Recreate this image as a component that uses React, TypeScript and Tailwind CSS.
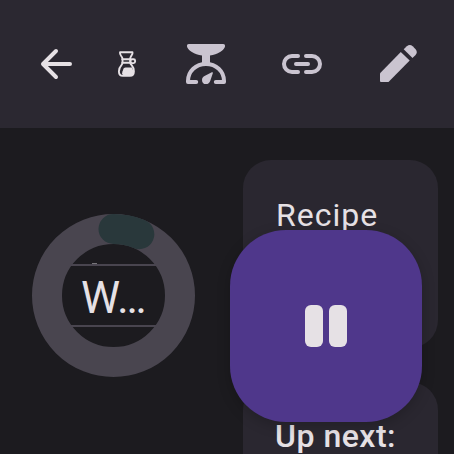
import React from "react";

function BackIcon() {
  return (
    <svg className="h-12 w-12" viewBox="0 0 48 48" fill="none" stroke="#e6e1e5" strokeWidth="4" strokeLinecap="round" strokeLinejoin="round">
      <path d="M24 11 L11 24 L24 37 M11 24 H38" />
    </svg>
  );
}

function ChemexIcon() {
  return (
    <svg className="h-10 w-[34px]" viewBox="0 0 34 40" fill="none" stroke="#e6e1e5" strokeWidth="1.9" strokeLinejoin="round" strokeLinecap="round">
      <path d="M10 8.3 H22.5 Q23 10 21.2 12 Q20.2 13.5 20.2 15 V18.5 Q20.4 20 21.8 21.3 Q24 23.8 23.9 27.4 Q23.8 31.8 20 31.8 H12.8 Q9 31.8 8.9 27.4 Q8.9 23.8 11.3 21.3 Q12.5 20 12.5 18.5 V15 Q12.5 13.5 11.2 12 Q9.7 10 10 8.3 Z" />
      <path d="M12.3 15.3 H20.5 M12.3 18.7 H20.5" />
      <rect x="20.5" y="15.2" width="4.6" height="3.9" rx="1.5" />
      <path d="M15.5 23.4 H22 Q24.2 27 23 31 H13.2 Q11.4 30 12.4 27.6 Q13.2 26 13.3 25 Q13.6 23.4 15.5 23.4 Z" fill="#e6e1e5" stroke="none" />
    </svg>
  );
}

function ScaleIcon() {
  return (
    <svg className="h-[60px] w-[60px]" viewBox="0 0 60 60" fill="#cac4d0">
      <path d="M12.8 10 H47.2 Q49.2 10 49.1 12 C48.4 16.5 41.5 20.6 34 21.6 V29 H26 V21.6 C18.5 20.6 11.6 16.5 10.9 12 Q10.8 10 12.8 10 Z" />
      <path d="M20.2 48 H12 V47 C12 37 20 29.9 30 29.9 S48 37 48 47 V48 H39.8" fill="none" stroke="#cac4d0" strokeWidth="4" strokeLinecap="round" strokeLinejoin="round" />
      <path d="M36.9 39 L34.2 47 Q33.2 50.1 30 50.1 Q26 50 26 45.9 Q26 43 29 41.8 L35.8 38.3 Q37.2 38 36.9 39 Z" />
    </svg>
  );
}

function LinkIcon() {
  return (
    <svg className="h-12 w-12" viewBox="0 0 48 48" fill="none" stroke="#cac4d0" strokeWidth="4" strokeLinecap="round">
      <path d="M20 16 H14 A8 8 0 0 0 14 32 H20 M28 16 H34 A8 8 0 0 1 34 32 H28 M18 24 H30" />
    </svg>
  );
}

function EditIcon() {
  return (
    <svg className="h-[60px] w-[60px]" viewBox="0 0 60 60" fill="#cac4d0">
      <path d="M32.8 18 L41.7 26.6 L20.5 48 H13 Q12 48 12 47 V39.2 Z" />
      <path d="M35.7 15.3 L38.8 12.2 Q41.9 9.7 44.7 12.2 L47.6 15.2 Q50 18 47.6 21.1 L44.5 24 Z" />
    </svg>
  );
}

function TimerRing() {
  return (
    <svg className="col-start-1 row-start-1 h-[163px] w-[163px]" viewBox="0 0 163 163" fill="none" strokeWidth="30">
      <circle cx="81.5" cy="81.5" r="66.5" stroke="#49454f" />
      <path d="M81.5 15 A66.5 66.5 0 0 1 107.3 20.2" stroke="#29383b" strokeLinecap="round" />
    </svg>
  );
}

export default function App() {
  return (
    <div className="relative flex h-[454px] w-[454px] flex-col overflow-hidden bg-[#1c1b1f] font-[Roboto,sans-serif] text-[#e6e1e5]">
      <header className="flex h-32 shrink-0 items-center bg-[#2b2831] pl-8">
        <BackIcon />
        <div className="ml-[30px]"><ChemexIcon /></div>
        <div className="ml-8"><ScaleIcon /></div>
        <div className="ml-[42px]"><LinkIcon /></div>
        <div className="ml-[42px]"><EditIcon /></div>
      </header>

      <main className="flex min-h-0 flex-1 pl-8 pt-8">
        <section className="mt-[54px] grid h-[163px] w-[163px] shrink-0 place-items-center">
          <TimerRing />
          <div className="col-start-1 row-start-1 mb-px flex w-[87px] flex-col">
            <div className="flex h-px pl-[22px]">
              <div className="h-px w-[5px] bg-[#77757a]" />
            </div>
            <div className="flex h-[63px] items-center border-y-2 border-[#49454f] pl-[11px] text-[44px] leading-[59px]">
              <span className="pt-[5px] tracking-[-0.3px]">W…</span>
            </div>
          </div>
        </section>

        <section className="ml-12 flex w-[195px] shrink-0 flex-col gap-[34px]">
          <article className="h-[188px] shrink-0 rounded-[28px] bg-[#2a2730] pl-[33px] pt-9 text-[32px] leading-[38px] tracking-[1px]">
            Recipe
          </article>
          <article className="h-[188px] shrink-0 rounded-[28px] bg-[#2a2730] pl-8 pt-[35px] text-[32px] font-medium leading-[38px] tracking-[0.5px]">
            Up next:
          </article>
        </section>
      </main>

      <button aria-label="Pause" className="absolute bottom-8 right-8 flex h-48 w-48 items-center justify-center gap-1.5 rounded-[56px] bg-[#4f378b] shadow-[0_4px_14px_rgba(0,0,0,0.2)]">
        <span className="h-[42px] w-[18px] rounded-[6px] bg-[#e6e1e5]" />
        <span className="h-[42px] w-[18px] rounded-[6px] bg-[#e6e1e5]" />
      </button>
    </div>
  );
}
